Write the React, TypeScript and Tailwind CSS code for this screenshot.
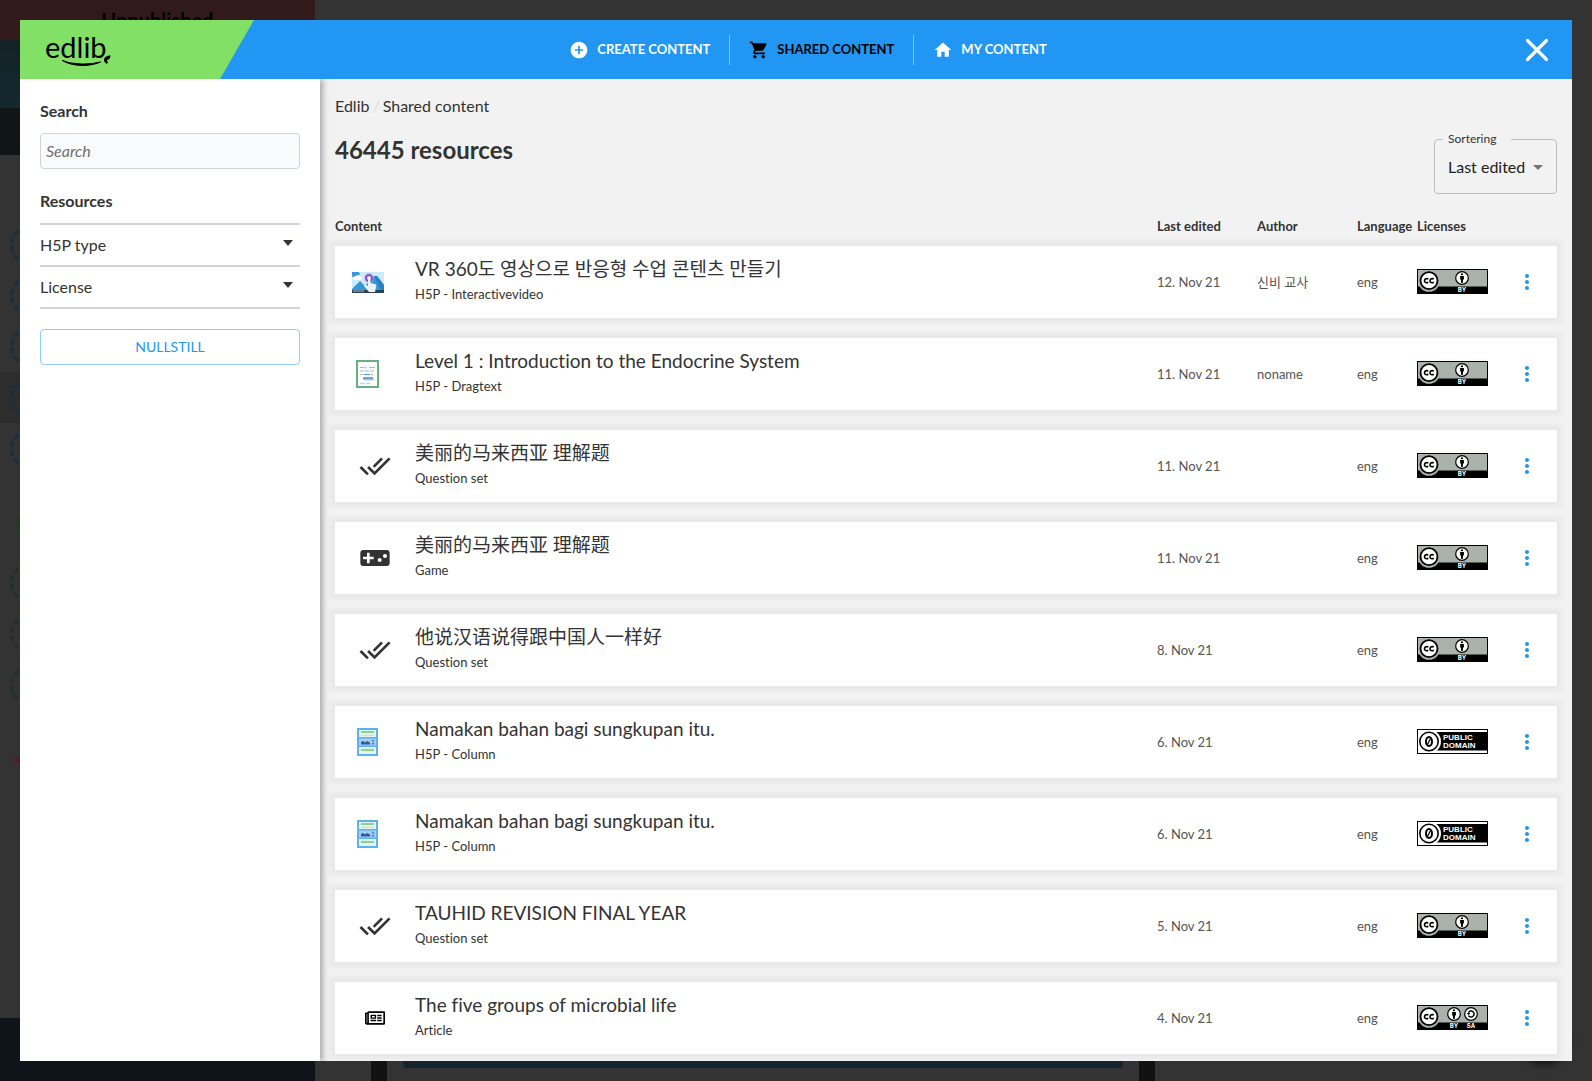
import React from "react";
import {
  MdAddCircle,
  MdShoppingCart,
  MdHome,
  MdDoneAll,
  MdVideogameAsset,
  MdMoreVert,
  MdArrowDropDown,
} from "react-icons/md";
import { FaRegNewspaper } from "react-icons/fa";

type IconKind = "video" | "dragtext" | "column" | "questions" | "game" | "article";
type License = "by" | "by-sa" | "pd";

interface Resource {
  icon: IconKind;
  title: string;
  lang?: string;
  type: string;
  date: string;
  author?: string;
  license: License;
}

const resources: Resource[] = [
  { icon: "video", title: "VR 360도 영상으로 반응형 수업 콘텐츠 만들기", lang: "ko", type: "H5P - Interactivevideo", date: "12. Nov 21", author: "신비 교사", license: "by" },
  { icon: "dragtext", title: "Level 1 : Introduction to the Endocrine System", type: "H5P - Dragtext", date: "11. Nov 21", author: "noname", license: "by" },
  { icon: "questions", title: "美丽的马来西亚 理解题", lang: "zh", type: "Question set", date: "11. Nov 21", license: "by" },
  { icon: "game", title: "美丽的马来西亚 理解题", lang: "zh", type: "Game", date: "11. Nov 21", license: "by" },
  { icon: "questions", title: "他说汉语说得跟中国人一样好", lang: "zh", type: "Question set", date: "8. Nov 21", license: "by" },
  { icon: "column", title: "Namakan bahan bagi sungkupan itu.", type: "H5P - Column", date: "6. Nov 21", license: "pd" },
  { icon: "column", title: "Namakan bahan bagi sungkupan itu.", type: "H5P - Column", date: "6. Nov 21", license: "pd" },
  { icon: "questions", title: "TAUHID REVISION FINAL YEAR", type: "Question set", date: "5. Nov 21", license: "by" },
  { icon: "article", title: "The five groups of microbial life", type: "Article", date: "4. Nov 21", license: "by-sa" },
];

const rowGrid = "grid grid-cols-[80px_minmax(0,1fr)_100px_100px_60px_80px_60px] items-center";

function VideoIcon() {
  return (
    <svg className="ml-[17px] h-[21px] w-8" viewBox="0 0 32 21" aria-hidden="true">
      <rect width="32" height="21" fill="#cdeafc" />
      <path d="M0 0h7a4 4 0 0 1-7 4z" fill="#3a97dc" />
      <path d="M1 7a3 3 0 0 1 3-3 3 3 0 0 1 5 1 2 2 0 0 1 0 3H2z" fill="#fff" />
      <path d="M0 17 8 9l5 5 9-10h3l7 9v6H0z" fill="#3498db" />
      <path d="M22 4h3l7 9v6h-3z" fill="#2b80c0" />
      <path d="M0 18h32v3H0z" fill="#2c4257" />
      <path d="M1 19h11" stroke="#aebccb" strokeWidth="1" />
      <circle cx="17" cy="6" r="5" fill="#b9a4e6" opacity=".6" />
      <circle cx="17" cy="6" r="3" fill="none" stroke="#8a44ad" strokeWidth="1.6" />
      <path d="M16 6a1.2 1.2 0 0 1 2.400 0v5l5 1.200c1 .3 1 1 .8 2L23 20h-6l-5-6c0-1.500 2-1.500 4 0z" fill="#eef1f4" />
    </svg>
  );
}

function DragTextIcon() {
  return (
    <svg className="ml-[21px] h-7 w-[23px]" viewBox="0 0 23 28" aria-hidden="true">
      <rect x="1" y="1" width="21" height="26" fill="#fff" stroke="#65b181" strokeWidth="2" />
      <path d="M4 7.500h3M13 7.500h6M4 11h4M14 11h4M4 14.500h3M15 14.500h2" stroke="#b5b5b5" strokeWidth="1" />
      <path d="M7 7.500h4M9 11h4M4 23.500h4.500M10 23.500h4" stroke="#b4d3ef" strokeWidth="1.400" />
      <path d="M8 14.500h6" stroke="#58a0da" strokeWidth="1.200" />
      <rect x="8" y="18.500" width="10" height="2" fill="#cbcbcb" />
      <rect x="7" y="17" width="10" height="2.500" fill="#6aa7dc" />
    </svg>
  );
}

function ColumnIcon() {
  return (
    <svg className="ml-[22px] h-7 w-[21px]" viewBox="0 0 21 28" aria-hidden="true">
      <rect width="21" height="28" fill="#59b3ee" />
      <rect x="2" y="2" width="17" height="7" fill="#e9f3ee" />
      <rect x="4" y="3" width="13" height="2" fill="#86d398" />
      <path d="M5 7.500h12" stroke="#d4dad9" />
      <rect x="2" y="10.500" width="17" height="7" fill="#a6cbf7" />
      <path d="M4 16.500V14l2-1 2 1.500 2-1.500 3 1.500v2z" fill="#2f5b99" />
      <path d="M16 11.500l1.500 2h-3zM14.500 15h3L16 17z" fill="#3c6fb4" />
      <rect x="2" y="19" width="17" height="7" fill="#e9f3ee" />
      <rect x="4" y="21" width="13" height="2" fill="#86d398" />
    </svg>
  );
}

function ResourceIcon({ kind }: { kind: IconKind }) {
  switch (kind) {
    case "video":
      return <VideoIcon />;
    case "dragtext":
      return <DragTextIcon />;
    case "column":
      return <ColumnIcon />;
    case "questions":
      return <MdDoneAll className="mx-auto size-8" />;
    case "game":
      return <MdVideogameAsset className="mx-auto size-8" />;
    case "article":
      return <FaRegNewspaper className="mx-auto size-5 text-black" />;
  }
}

function Attribution({ x }: { x: number }) {
  return (
    <g>
      <circle cx={x} cy="9" r="6.300" fill="#fff" stroke="#000" strokeWidth="1.200" />
      <circle cx={x} cy="5.300" r="1.100" />
      <path d={`M${x - 1.9} 7h3.800v3.400h-.9v3.400h-2v-3.400h-.9z`} />
    </g>
  );
}

function LicenseBadge({ license }: { license: License }) {
  if (license === "pd") {
    return (
      <svg className="h-[25px] w-[71px]" viewBox="0 0 71 25" role="img" aria-label="Public domain">
        <rect x=".5" y=".5" width="70" height="24" fill="#fff" stroke="#000" />
        <rect x="18" y="3" width="52" height="18.500" />
        <circle cx="12" cy="12.500" r="12" fill="#fff" />
        <path d="M.5 24.500V.5H30M.5 24.500H30" stroke="#000" fill="none" />
        <circle cx="12" cy="12.500" r="9.200" fill="#fff" stroke="#000" strokeWidth="1.600" />
        <ellipse cx="12" cy="12.500" rx="3" ry="4.600" fill="none" stroke="#000" strokeWidth="2" />
        <path d="M10.500 15.500l3-6" stroke="#000" strokeWidth="1.200" />
        <g className="font-['Liberation_Sans',sans-serif] text-[8px] font-bold" fill="#fff">
          <text x="26" y="11">PUBLIC</text>
          <text x="26" y="19">DOMAIN</text>
        </g>
      </svg>
    );
  }
  const byX = license === "by" ? 45 : 37;
  return (
    <svg className="h-[25px] w-[71px]" viewBox="0 0 71 25" role="img" aria-label={`Creative Commons ${license}`}>
      <rect width="71" height="25" />
      <rect x="1" y="1" width="69" height="16.500" fill="#aab2ab" />
      <circle cx="12" cy="12" r="10.800" fill="#aab2ab" />
      <circle cx="12" cy="11.700" r="8.500" fill="#fff" stroke="#000" strokeWidth="1.800" />
      <path
        d="M11.200 10.300a2.100 2.100 0 1 0 0 2.800M16.700 10.300a2.100 2.100 0 1 0 0 2.800"
        fill="none"
        stroke="#000"
        strokeWidth="1.600"
      />
      <Attribution x={byX} />
      <g className="font-['Inter',sans-serif] text-[6px] font-bold" fill="#fff" textAnchor="middle">
        <text x={byX} y="23">BY</text>
        {license === "by-sa" && <text x="54" y="23">SA</text>}
      </g>
      {license === "by-sa" && (
        <g>
          <circle cx="54" cy="9" r="6.300" fill="#fff" stroke="#000" strokeWidth="1.200" />
          <path d="M51.500 7.500a3 3 0 1 1 0 3" fill="none" stroke="#000" strokeWidth="1.500" />
          <path d="M49.800 8h3.600l-1.800 2.200z" />
        </g>
      )}
    </svg>
  );
}

function Logo() {
  return (
    <a href="#" aria-label="edlib" className="relative ml-[25px] block h-[38px] w-[68px] text-black">
      <span className="block text-[29px] leading-8">edlib</span>
      <svg className="absolute left-4 top-6 h-3.5 w-[52px]" viewBox="0 0 52 14" aria-hidden="true">
        <path d="M1.500 5.500C12 11.500 28 12 39.500 7 28 10 12 9.800 1.500 5.500z" stroke="#000" strokeWidth="1.200" strokeLinejoin="round" />
        <path d="M43 4.500c.5-2.800 3.500-4 6.500-4-.3 3-1.500 4.500-3.800 4.800L47 7.500 45.500 9c-.6-1-1.300-1.700-2.500-2.500z" />
      </svg>
    </a>
  );
}

const nav = [
  { label: "CREATE CONTENT", Icon: MdAddCircle, active: false },
  { label: "SHARED CONTENT", Icon: MdShoppingCart, active: true },
  { label: "MY CONTENT", Icon: MdHome, active: false },
];

function Header() {
  return (
    <header className="flex h-[59px] shrink-0 bg-[#2196f3]">
      <div className="flex w-[234px] shrink-0 items-center bg-[#82e066] [clip-path:polygon(0_0,100%_0,calc(100%-34px)_100%,0_100%)]">
        <Logo />
      </div>
      <nav className="flex flex-1 items-center justify-center">
        {nav.map(({ label, Icon, active }, i) => (
          <a
            key={label}
            href="#"
            className={`flex h-[30px] items-center gap-2 px-[19px] text-[13px] font-bold whitespace-nowrap ${
              i > 0 ? "border-l border-[#9bdc3c]" : ""
            } ${active ? "text-black" : "text-white"}`}
          >
            <Icon className="size-5" />
            {label}
          </a>
        ))}
      </nav>
      <div className="flex w-[210px] shrink-0 items-center justify-end pr-5">
        <button type="button" aria-label="Close" className="flex size-[30px] items-center justify-center text-white">
          <svg viewBox="0 0 24 24" className="size-6" aria-hidden="true">
            <path d="M2.500 2.500l19 19M21.500 2.500l-19 19" stroke="currentColor" strokeWidth="3.200" strokeLinecap="round" />
          </svg>
        </button>
      </div>
    </header>
  );
}

function Sidebar() {
  return (
    <aside className="z-10 w-[300px] shrink-0 bg-white px-5 pt-5 shadow-[3px_0_6px_rgba(0,0,0,0.3)]">
      <label htmlFor="search" className="block font-bold leading-6">
        Search
      </label>
      <input
        id="search"
        type="text"
        placeholder="Search"
        className="mt-2.5 block h-9 w-full rounded border border-[#ced4da] bg-[#fafbfd] px-[5px] pb-0.5 placeholder:text-[#6f6f6f] placeholder:italic"
      />
      <h2 className="mt-5 font-bold leading-6">Resources</h2>
      <div className="mt-2.5 border-t-2 border-[#d0d4d8]">
        {["H5P type", "License"].map((label) => (
          <button
            key={label}
            type="button"
            className="flex h-[42px] w-full items-start justify-between border-b-2 border-[#d0d4d8] pt-2 pr-1.5 text-left leading-6"
          >
            {label}
            <svg viewBox="0 0 12 6" className="mt-[7px] h-1.5 w-3" aria-hidden="true">
              <path d="M1 0h10L6 6z" fill="currentColor" />
            </svg>
          </button>
        ))}
      </div>
      <button type="button" className="mt-5 h-9 w-full rounded border border-[#90caf9] text-sm text-[#2196f3]">
        NULLSTILL
      </button>
    </aside>
  );
}

function SortSelect() {
  return (
    <fieldset className="relative -mt-1 h-[65px] w-[123px] rounded border border-[#bcbcbc] pl-2">
      <legend className="w-[68px] px-[5px] text-xs leading-5">
        <label htmlFor="sort">Sortering</label>
      </legend>
      <select id="sort" className="h-9 w-full appearance-none bg-transparent pl-[5px] text-[#212121]">
        <option>Last edited</option>
      </select>
      <MdArrowDropDown className="pointer-events-none absolute right-1.5 top-1.5 size-6 text-[#757575]" />
    </fieldset>
  );
}

function ResourceTable() {
  return (
    <table className="block">
      <thead className="block">
        <tr className={`${rowGrid} h-10 pt-0.5 text-left text-[13px]`}>
          <th className="col-span-2">Content</th>
          <th>Last edited</th>
          <th>Author</th>
          <th>Language</th>
          <th>Licenses</th>
          <th aria-label="Actions" />
        </tr>
      </thead>
      <tbody className="flex flex-col gap-5">
        {resources.map((r, i) => (
          <tr key={i} className={`${rowGrid} h-[72px] bg-white text-[13px] text-[#555] shadow-[0_0_5px_5px_rgba(0,0,0,0.04)]`}>
            <td className="text-[#333]">
              <ResourceIcon kind={r.icon} />
            </td>
            <td className="pb-1 text-[#333]">
              <div lang={r.lang} className="truncate text-[19px] leading-[26px]">
                {r.title}
              </div>
              <div className="mt-0.5 leading-5">{r.type}</div>
            </td>
            <td className="pt-0.5">{r.date}</td>
            <td className="pt-0.5" lang={r.author === "noname" ? undefined : "ko"}>
              {r.author}
            </td>
            <td className="pt-0.5">eng</td>
            <td className="pb-0.5">
              <LicenseBadge license={r.license} />
            </td>
            <td className="pl-[18px]">
              <button type="button" aria-label={`More options for ${r.title}`} className="block text-[#2196f3]">
                <MdMoreVert className="size-6" />
              </button>
            </td>
          </tr>
        ))}
      </tbody>
    </table>
  );
}

function Step({ tone, current = false }: { tone: string; current?: boolean }) {
  return (
    <div className={`flex h-[51px] items-center pl-2.5 ${current ? "bg-[#2d2d2d]" : ""}`}>
      <div className={`size-10 rounded-full border-3 border-dashed ${tone}`} />
    </div>
  );
}

/* The dimmed course page that the dialog covers. */
function CoursePage() {
  return (
    <div aria-hidden="true" className="flex h-full bg-[#333]">
      <div className="flex w-[315px] flex-col">
        <div className="h-10 bg-[#321a1a] pt-1.5 text-center text-xl font-bold text-black">Unpublished</div>
        <div className="h-[68px] bg-linear-to-b from-[#142227] to-[#13292e]" />
        <div className="h-[47px] bg-[#101516]" />
        <div className="mt-16">
          {[0, 1, 2, 3, 4].map((n) => (
            <Step key={n} tone="border-[#17303f]" current={n === 3} />
          ))}
        </div>
        <div className="mt-[34px] ml-4 size-8 rounded-full border-4 border-[#1f3d20]" />
        <div className="mt-[17px]">
          {[0, 1, 2].map((n) => (
            <Step key={n} tone="border-[#1f3320]" />
          ))}
        </div>
        <div className="mt-[47px] ml-3.5 h-1.5 w-4 rounded-full bg-[#521c22]" />
        <div className="mt-auto h-[63px] bg-[#0e1419]" />
      </div>
      <div className="flex flex-1 items-end pl-14">
        <div className="flex h-10 w-[784px] items-start border-x-[16px] border-[#111] px-4">
          <div className="h-[27px] w-full rounded-b bg-[#14242e]" />
        </div>
      </div>
      <div className="flex flex-col justify-between">
        <div className="mt-[115px] mr-[15px] h-px w-10 bg-[#111]" />
        <div className="mr-6 mb-5 size-12 rounded-full bg-[#222] shadow-[0_3px_8px_#111]" />
      </div>
    </div>
  );
}

export default function App() {
  return (
    <div className="relative h-screen overflow-hidden font-['Lato','Noto_Sans_CJK_SC',sans-serif] text-base text-[#333] [font-variant-ligatures:none] [&_:lang(ko)]:font-['Lato','Noto_Sans_CJK_KR',sans-serif]">
      <CoursePage />
      <div role="dialog" aria-label="Edlib" className="absolute inset-5 flex flex-col overflow-hidden bg-[#f2f2f2]">
        <Header />
        <div className="flex min-h-0 flex-1 overflow-hidden">
          <Sidebar />
          <main className="min-w-0 flex-1 overflow-hidden px-[15px] pt-[15px]">
            <nav aria-label="Breadcrumb" className="flex gap-[3px] leading-6">
              <a href="#">Edlib</a>
              <span className="text-[#dcdfe6]">/</span>
              <a href="#">Shared content</a>
            </nav>
            <div className="mt-[15px] mb-3 flex items-start justify-between">
              <h1 className="text-2xl font-bold leading-[34px]">46445 resources</h1>
              <SortSelect />
            </div>
            <ResourceTable />
          </main>
        </div>
      </div>
    </div>
  );
}
